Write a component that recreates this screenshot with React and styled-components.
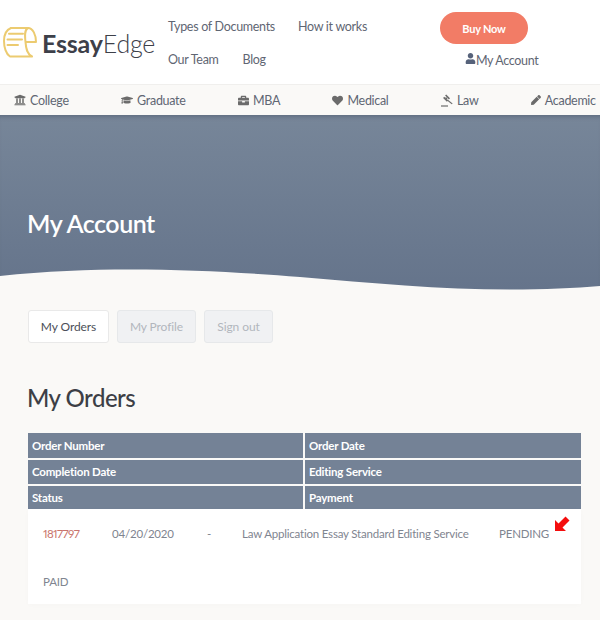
import React from "react";
import styled, { createGlobalStyle } from "styled-components";
import { FaUniversity, FaGraduationCap, FaBriefcase, FaHeart, FaPen, FaUser } from "react-icons/fa";

const Global = createGlobalStyle`
  html, body { margin: 0; padding: 0; background: #faf9f7; }
  body { font-family: Lato, "Open Sans", sans-serif; color: #5b6270; }
  * { box-sizing: border-box; }
`;

const Page = styled.div`width: 600px; height: 620px; overflow: hidden; background: #faf9f7;`;
const Header = styled.header`
  height: 84px; background: #fff; display: flex; padding-left: 3px;
`;
const Logo = styled.div`display: flex; align-items: center; width: 165px; height: 84px; padding-top: 1px;`;
const LogoText = styled.span`
  font-size: 25px; color: #3d4049; margin-left: 5px; letter-spacing: -0.2px;
  b { font-weight: 700; }
  span { font-weight: 300; }
`;
const MainNav = styled.nav`
  width: 272px; display: flex; flex-direction: column; padding-top: 17px; gap: 13px;
`;
const NavRow = styled.div`display: flex; gap: ${p => p.$gap}px; height: 20px; align-items: center;`;
const NavLink = styled.a`font-size: 12.5px; letter-spacing: -0.3px; color: #5f6673; line-height: 20px;`;
const Cta = styled.div`display: flex; flex-direction: column; padding-top: 12px; width: 130px;`;
const BuyNow = styled.button`
  width: 88px; height: 32px; border: 0; border-radius: 16px; background: #f27c66; color: #fff;
  font: 700 11px Lato, sans-serif; letter-spacing: -0.2px;
`;
const AccountLink = styled.a`
  display: flex; align-items: center; margin: 6px 0 0 25px; height: 20px; font-size: 12.5px; letter-spacing: -0.35px; color: #5f6673;
  svg { color: #56627a; margin-bottom: 3px; }
`;
const SubNav = styled.nav`
  height: 31px; background: #faf9f7; border-top: 1px solid #f0efed; display: flex;
  align-items: center; padding-left: 14px; gap: 52.4px; white-space: nowrap;
`;
const SubLink = styled.a`
  display: flex; align-items: center; gap: 4px; font-size: 12.5px; letter-spacing: -0.3px; color: #5f6673;
  svg { color: #6b6b6b; flex: none; }
`;
const Hero = styled.section`
  position: relative; height: 175px; background: linear-gradient(#778699, #65748b);
  padding: 93px 0 0 27px; box-shadow: inset 0 5px 5px -4px rgba(60,70,90,.5);
`;
const HeroTitle = styled.h1`margin: 0; font-size: 25px; line-height: 30px; font-weight: 600; letter-spacing: -0.5px; color: #fff;`;
const Wave = styled.svg`position: absolute; left: 0; bottom: 0; display: block;`;
const Content = styled.main`padding: 20px 19px 0 28px;`;
const Tabs = styled.div`display: flex; gap: 8px;`;
const Tab = styled.button`
  height: 33px; width: ${p => p.$w}px; padding: 0; border-radius: 3px; font: 12px Lato, sans-serif; letter-spacing: -0.1px;
  border: 1px solid ${p => p.$active ? "#e9e9e9" : "#e6e8ea"};
  background: ${p => p.$active ? "#fff" : "#f0f1f3"};
  color: ${p => p.$active ? "#4c4f58" : "#b2b6bd"};
`;
const Title = styled.h2`margin: 40px 0 20px -1px; font-size: 24px; line-height: 30px; font-weight: 500; letter-spacing: -0.5px; color: #3d3f46;`;
const HeadGrid = styled.div`
  display: grid; grid-template-columns: 275px 276px; column-gap: 2px; row-gap: 2px;
`;
const HeadCell = styled.div`
  height: ${p => p.$h}px; background: #748296; color: #fff; font-weight: 700; font-size: 11.5px; letter-spacing: -0.2px;
  line-height: ${p => p.$h}px; padding-left: 4px;
`;
const Card = styled.div`
  position: relative; background: #fff; height: 95px; width: 553px; padding: 0 15px;
  box-shadow: 0 1px 6px rgba(0,0,0,.02);
`;
const DataRow = styled.div`display: flex; height: 48px; align-items: center; padding-top: 1px; font-size: 11.5px; letter-spacing: -0.2px; color: #7f8590;`;
const Cell = styled.span`width: ${p => p.$w}px; flex: none; color: ${p => p.$c || "inherit"};`;
const OrderId = styled(Cell)`font-feature-settings: "pnum"; letter-spacing: -0.6px;`;
const Marker = styled.svg`position: absolute; left: 526px; top: 6px;`;

const LawIcon = () => (
  <svg width="12" height="13" viewBox="0 0 12 13" fill="#6b6b6b">
    <path d="M5.2 0.5 L9 4.3 L7.9 5.4 L4.1 1.6 Z M3.2 2.8 L7 6.6 L5.9 7.7 L2.1 3.9 Z" />
    <path d="M5 3 L6.5 4.5 L5.6 5.4 L4.1 3.9 Z" />
    <path d="M6.6 5.4 L11.6 9.4 L10.8 10.2 L5.7 6.3 Z" />
    <path d="M0 11.4 H7 V12.6 H0 Z" />
  </svg>
);

const subs = [
  [<FaUniversity size={12} />, "College"], [<FaGraduationCap size={12} />, "Graduate"], [<FaBriefcase size={11} />, "MBA"],
  [<FaHeart size={11} />, "Medical"], [<LawIcon />, "Law"], [<FaPen size={10} />, "Academic"],
];

export default function App() {
  return (
    <Page>
      <Global />
      <Header>
        <Logo>
          <svg width="34" height="31" viewBox="0 0 34 31" fill="none" stroke="#eccb70" strokeWidth="2" strokeLinecap="round" strokeLinejoin="round">
            <path d="M8 1 H25 C30 1 33 8 33 15 H23.2" />
            <path d="M25 1 C21 3 22 10 22.5 15 C23 22 24 27 29 29.5 H7 C3 27 1 20 1 14 C1 8 3 3 8 1" />
            <path d="M6 6.8 H20 M4.5 12.5 H19 M4.5 18 H15" />
          </svg>
          <LogoText><b>Essay</b><span>Edge</span></LogoText>
        </Logo>
        <MainNav>
          <NavRow $gap={23}><NavLink>Types of Documents</NavLink><NavLink>How it works</NavLink></NavRow>
          <NavRow $gap={24}><NavLink>Our Team</NavLink><NavLink>Blog</NavLink></NavRow>
        </MainNav>
        <Cta>
          <BuyNow>Buy Now</BuyNow>
          <AccountLink><FaUser size={11} />My Account</AccountLink>
        </Cta>
      </Header>
      <SubNav>
        {subs.map(([icon, t]) => <SubLink key={t}>{icon}{t}</SubLink>)}
      </SubNav>
      <Hero>
        <HeroTitle>My Account</HeroTitle>
        <Wave width="600" height="24" viewBox="0 0 600 24">
          <path d="M0 10 C45 5 90 3.5 130 3.5 C190 3.5 250 7 300 11 C370 17 440 23.5 510 23.5 C545 23.5 575 22 600 20 V24 H0 Z" fill="#faf9f7" />
        </Wave>
      </Hero>
      <Content>
        <Tabs>
          <Tab $active $w={81}>My Orders</Tab>
          <Tab $w={79}>My Profile</Tab>
          <Tab $w={69}>Sign out</Tab>
        </Tabs>
        <Title>My Orders</Title>
        <HeadGrid>
          <HeadCell $h={25}>Order Number</HeadCell><HeadCell $h={25}>Order Date</HeadCell>
          <HeadCell $h={24}>Completion Date</HeadCell><HeadCell $h={24}>Editing Service</HeadCell>
          <HeadCell $h={23}>Status</HeadCell><HeadCell $h={23}>Payment</HeadCell>
        </HeadGrid>
        <Card>
          <DataRow>
            <OrderId $w={69} $c="#c9736b">1817797</OrderId>
            <Cell $w={95}>04/20/2020</Cell>
            <Cell $w={35}>-</Cell>
            <Cell $w={257}>Law Application Essay Standard Editing Service</Cell>
            <Cell $w={60}>PENDING</Cell>
          </DataRow>
          <DataRow>PAID</DataRow>
          <Marker width="17" height="17" viewBox="0 0 17 17">
            <path d="M1 16 V5 L4.5 8.5 L11.5 1.5 L15.5 5.5 L8.5 12.5 L12 16 Z" fill="#f40d0d" />
          </Marker>
        </Card>
      </Content>
    </Page>
  );
}
